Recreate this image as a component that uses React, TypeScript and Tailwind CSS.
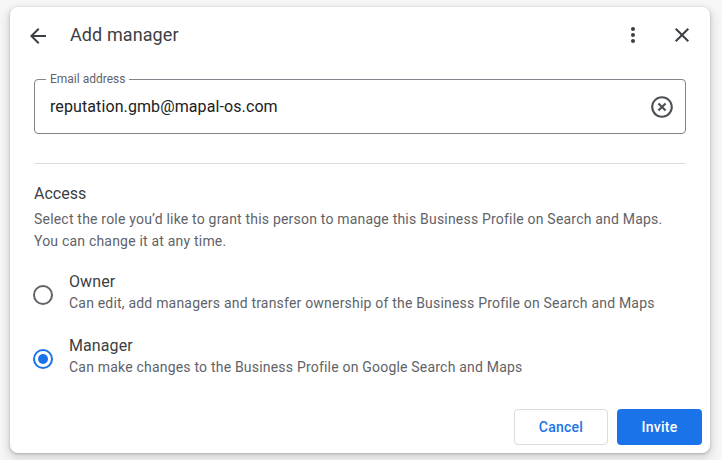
import React from "react";

export default function App() {
  return (
    <div
      className="w-[722px] h-[460px] bg-[#f7f7f7] pt-[7px] pl-[10px] overflow-hidden"
      style={{ fontFamily: "Roboto, 'Liberation Sans', sans-serif" }}
    >
      <div className="w-[700px] h-[446px] bg-white rounded-[8px] shadow-[0_1px_3px_rgba(60,64,67,0.3),0_4px_8px_3px_rgba(60,64,67,0.15)] flex flex-col">
        {/* Header */}
        <div className="h-[56px] flex items-center pl-[16px] pr-[16px]">
          <svg width="24" height="24" viewBox="0 0 24 24" className="text-[#3c4043] mt-[1px]">
            <path fill="currentColor" d="M20 11H7.83l5.59-5.59L12 4l-8 8 8 8 1.41-1.41L7.83 13H20v-2z" />
          </svg>
          <div className="ml-[20px] text-[18px] text-[#3c4043] leading-[24px] tracking-[0.1px]">Add manager</div>
          <div className="flex-1" />
          <svg width="24" height="24" viewBox="0 0 24 24" className="text-[#3c4043] mr-[25px]">
            <path fill="currentColor" d="M12 8c1.1 0 2-.9 2-2s-.9-2-2-2-2 .9-2 2 .9 2 2 2zm0 2c-1.1 0-2 .9-2 2s.9 2 2 2 2-.9 2-2-.9-2-2-2zm0 6c-1.1 0-2 .9-2 2s.9 2 2 2 2-.9 2-2-.9-2-2-2z" />
          </svg>
          <svg width="24" height="24" viewBox="0 0 24 24" className="text-[#3c4043]">
            <path fill="currentColor" d="M19 6.41 17.59 5 12 10.59 6.41 5 5 6.41 10.59 12 5 17.59 6.41 19 12 13.41 17.59 19 19 17.59 13.41 12z" />
          </svg>
        </div>

        <div className="px-[24px] flex flex-col">
          {/* Email field */}
          <div className="relative mt-[16px] h-[55px] border border-[#80868b] rounded-[4px] flex items-center pl-[15px] pr-[10px]">
            <span className="absolute -top-[9px] left-[11px] bg-white px-[4px] text-[12px] leading-[16px] text-[#5f6368]">
              Email address
            </span>
            <span className="flex-1 text-[16px] text-[#202124] tracking-[0.1px]">reputation.gmb@mapal-os.com</span>
            <svg width="26" height="26" viewBox="0 0 24 24" className="text-[#4d5156]">
              <path fill="currentColor" d="M14.59 8 12 10.59 9.41 8 8 9.41 10.59 12 8 14.59 9.41 16 12 13.41 14.59 16 16 14.59 13.41 12 16 9.41 14.59 8zM12 2C6.47 2 2 6.47 2 12s4.47 10 10 10 10-4.47 10-10S17.53 2 12 2zm0 18c-4.41 0-8-3.59-8-8s3.59-8 8-8 8 3.59 8 8-3.59 8-8 8z" />
            </svg>
          </div>

          {/* Divider */}
          <div className="mt-[29px] h-px bg-[#dadce0]" />

          {/* Access */}
          <div className="mt-[18px] text-[16px] leading-[24px] text-[#3c4043]">Access</div>
          <div className="mt-[2px] text-[14px] leading-[22px] text-[#5f6368] tracking-[0.2px]">
            Select the role you’d like to grant this person to manage this Business Profile on Search and Maps.
            <br />
            You can change it at any time.
          </div>

          {/* Owner */}
          <div className="mt-[19px] flex items-center">
            <div className="w-[20px] h-[20px] rounded-full border-2 border-[#5f6368] ml-[-1px] mt-[6px]" />
            <div className="ml-[16px] flex flex-col">
              <span className="text-[16px] leading-[22px] text-[#3c4043] tracking-[0.1px]">Owner</span>
              <span className="text-[14px] leading-[20px] text-[#5f6368] tracking-[0.2px]">
                Can edit, add managers and transfer ownership of the Business Profile on Search and Maps
              </span>
            </div>
          </div>

          {/* Manager */}
          <div className="mt-[22px] flex items-center">
            <div className="w-[20px] h-[20px] rounded-full border-2 border-[#1a73e8] ml-[-1px] mt-[6px] flex items-center justify-center">
              <div className="w-[10px] h-[10px] rounded-full bg-[#1a73e8]" />
            </div>
            <div className="ml-[16px] flex flex-col">
              <span className="text-[16px] leading-[22px] text-[#3c4043] tracking-[0.1px]">Manager</span>
              <span className="text-[14px] leading-[20px] text-[#5f6368] tracking-[0.2px]">
                Can make changes to the Business Profile on Google Search and Maps
              </span>
            </div>
          </div>
        </div>

        <div className="flex-1" />

        {/* Footer */}
        <div className="flex justify-end gap-[9px] pr-[8px] pb-[8px]">
          <button className="w-[94px] h-[36px] rounded-[4px] border border-[#dadce0] bg-white text-[14px] font-medium text-[#1a73e8] tracking-[0.25px]">
            Cancel
          </button>
          <button className="w-[85px] h-[36px] rounded-[4px] bg-[#1a73e8] text-[14px] font-medium text-white tracking-[0.25px]">
            Invite
          </button>
        </div>
      </div>
    </div>
  );
}
